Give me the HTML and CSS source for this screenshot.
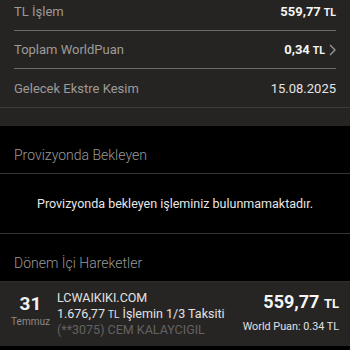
FILE: index.html
```html
<!DOCTYPE html>
<html lang="tr">
<head>
<meta charset="utf-8">
<link rel="stylesheet" href="styles.css">
</head>
<body>
<div class="summary">
  <div class="row inset">
    <span class="label">TL İşlem</span>
    <span class="value bold">559,77 <small>TL</small></span>
  </div>
  <div class="row inset">
    <span class="label">Toplam WorldPuan</span>
    <span class="value bold">0,34 <small>TL</small><svg class="chev" width="7" height="12" viewBox="0 0 7 12"><path d="M1 1l5 5-5 5" fill="none" stroke="#9a9a9a" stroke-width="1.3"/></svg></span>
  </div>
  <div class="row full">
    <span class="label">Gelecek Ekstre Kesim</span>
    <span class="value">15.08.2025</span>
  </div>
</div>
<div class="section-title bordered">Provizyonda Bekleyen</div>
<div class="empty">Provizyonda bekleyen işleminiz bulunmamaktadır.</div>
<div class="section-title second">Dönem İçi Hareketler</div>
<div class="tx">
  <div class="date">
    <div class="day">31</div>
    <div class="month">Temmuz</div>
  </div>
  <div class="info">
    <div class="merchant">LCWAIKIKI.COM</div>
    <div class="desc">1.676,77 <small>TL</small> İşlemin 1/3 Taksiti</div>
    <div class="card">(**3075) CEM KALAYCIGIL</div>
  </div>
  <div class="amount">
    <div class="sum">559,77 <small>TL</small></div>
    <div class="points">World Puan: 0.34 TL</div>
  </div>
</div>
</body>
</html>
```
FILE: styles.css
```css
* { box-sizing: border-box; }
html, body { margin: 0; padding: 0; }
body {
  width: 350px;
  height: 350px;
  overflow: hidden;
  background: #000;
  font-family: Roboto, "Liberation Sans", sans-serif;
  color: #e2e2e2;
}
.summary {
  background: #262422;
  margin-top: -7px;
  padding-bottom: 18px;
}
.row {
  display: flex;
  align-items: center;
  justify-content: space-between;
  height: 38px;
  padding: 0 14px;
  font-size: 13px;
}
.row.inset {
  margin: 0 14px;
  padding: 0;
  border-bottom: 1px solid #6c6b69;
}
.row.full {
  height: 39px;
  border-bottom: 1px solid #3d3b39;
}
.label { color: #9c9b99; }
.value { color: #e4e4e4; display: flex; align-items: baseline; }
.value.bold { font-weight: 700; color: #f4f4f4; font-size: 13px; }
.value small { font-size: 10.5px; margin-left: 3px; }
.chev { margin-left: 4px; align-self: center; }
.section-title {
  height: 48px;
  padding: 21px 14px 0;
  font-size: 14px;
  font-weight: 300;
  color: #9a9a9a;
}
.section-title.second { height: 47px; }
.section-title.bordered {
  border-bottom: 1px solid #343434;
}
.empty {
  height: 60px;
  display: flex;
  align-items: center;
  justify-content: center;
  font-size: 12.5px;
  color: #e6e6e6;
  border-bottom: 1px solid #343434;
  padding-bottom: 1px;
}
.tx {
  background: #272524;
  height: 65px;
  display: flex;
  align-items: center;
  padding: 0 11px 0 11px;
  border-top: 1px solid #2f2d2b;
}
.date {
  width: 39px;
  text-align: center;
  margin-bottom: 6px;
}
.day {
  font-size: 19px;
  font-weight: 700;
  color: #f2f2f2;
  line-height: 22px;
}
.month {
  font-size: 10px;
  color: #8a8a8a;
  line-height: 14px;
}
.info {
  flex: 1;
  margin-left: 7px;
  font-size: 12.5px;
  line-height: 15.5px;
  color: #e2e2e2;
}
.info small { font-size: 10px; }
.card { color: #646260; }
.amount {
  text-align: right;
}
.sum {
  font-size: 18px;
  font-weight: 700;
  color: #f6f6f6;
  line-height: 24px;
}
.sum small { font-size: 13px; }
.points {
  font-size: 10.8px;
  color: #e0e0e0;
  line-height: 22px;
}
```
